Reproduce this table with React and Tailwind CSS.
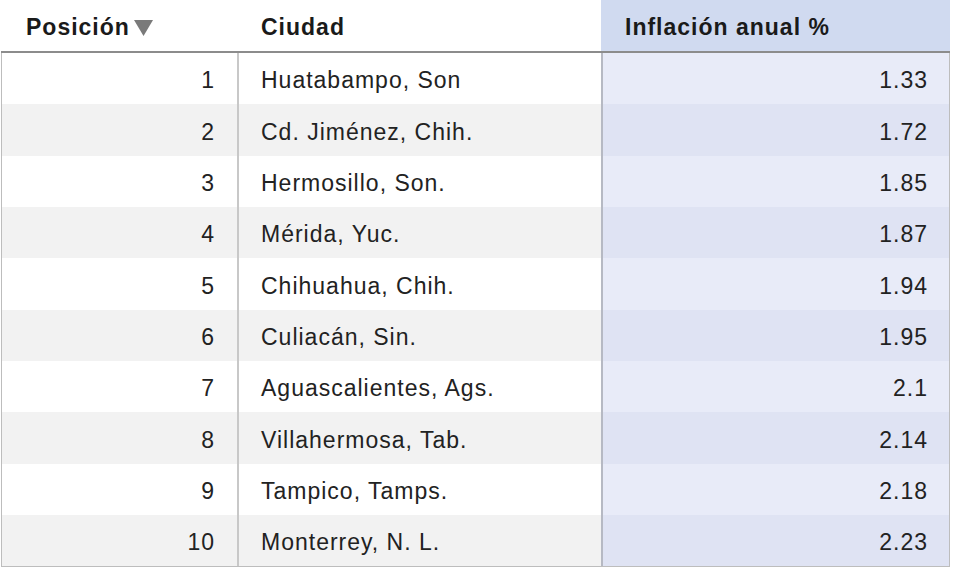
import React from 'react';

const rows = [
  [1, 'Huatabampo, Son', '1.33'],
  [2, 'Cd. Jiménez, Chih.', '1.72'],
  [3, 'Hermosillo, Son.', '1.85'],
  [4, 'Mérida, Yuc.', '1.87'],
  [5, 'Chihuahua, Chih.', '1.94'],
  [6, 'Culiacán, Sin.', '1.95'],
  [7, 'Aguascalientes, Ags.', '2.1'],
  [8, 'Villahermosa, Tab.', '2.14'],
  [9, 'Tampico, Tamps.', '2.18'],
  [10, 'Monterrey, N. L.', '2.23'],
];

const App = () => {
  return (
    <div className="w-[953px] h-[572px] bg-white overflow-hidden font-['Liberation_Sans',Arial,sans-serif] text-[23px] tracking-[1px] text-[#222]">
      <div className="ml-px w-[949px]">
        {/* Header */}
        <div className="flex h-[53px] border-b-2 border-[#8c8c8c] font-bold text-[#1a1a1a]">
          <div className="w-[236px] flex items-center pl-[25px] pt-[4px]">
            <span>Posición</span>
            <svg width="19" height="16" viewBox="0 0 19 16" className="ml-[4px] mt-[1px]">
              <polygon points="0,0 19,0 9.5,16" fill="#7a7a7a" />
            </svg>
          </div>
          <div className="w-[364px] flex items-center pl-[24px] pt-[4px]">Ciudad</div>
          <div className="flex-1 flex items-center pl-[24px] pt-[4px] bg-[#d0daf0]">Inflación anual %</div>
        </div>

        {/* Body */}
        <div className="border-x border-b border-[#bdbdbd]">
          {rows.map(([pos, city, value], i) => {
            const even = i % 2 === 1;
            return (
              <div key={pos} className={`flex h-[51.33px] ${even ? 'bg-[#f2f2f2]' : 'bg-white'}`}>
                <div className="w-[235px] flex items-center justify-end pr-[22px] pt-[4px]">{pos}</div>
                <div className="w-[364px] flex items-center pl-[22px] pt-[4px] border-l-2 border-[#c8c8c8]">{city}</div>
                <div className={`flex-1 flex items-center justify-end pr-[21px] pt-[4px] border-l-2 border-[#b6b9c3] ${even ? 'bg-[#dfe3f3]' : 'bg-[#e8ebf8]'}`}>
                  {value}
                </div>
              </div>
            );
          })}
        </div>
      </div>
    </div>
  );
};

export default App;
